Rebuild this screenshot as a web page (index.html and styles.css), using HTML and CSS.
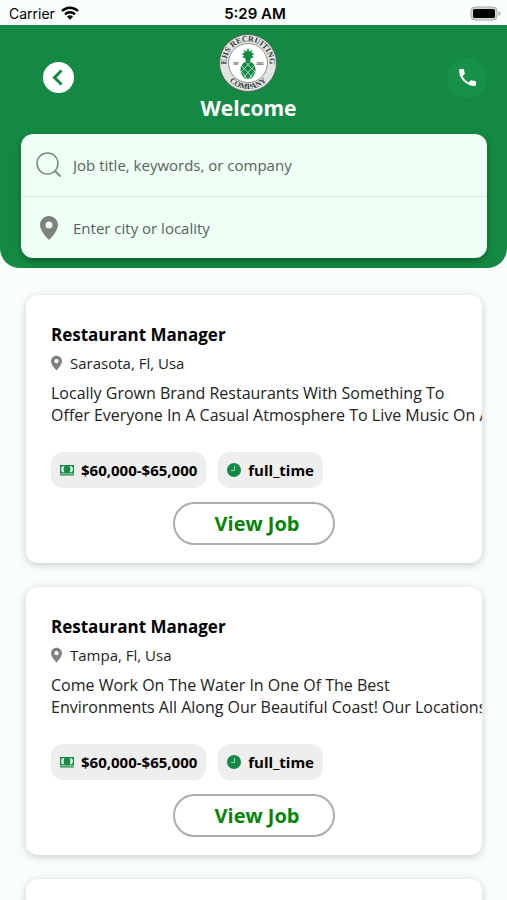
FILE: index.html
```
<!DOCTYPE html>
<html lang="en">
<head>
    <meta charset="UTF-8">
    <meta name="viewport" content="width=device-width, initial-scale=1.0">
    <title>EHS Recruiting</title>
    <link rel="stylesheet" href="styles.css">
</head>
<body>
    <svg class="sprite" width="0" height="0" aria-hidden="true">
        <symbol id="pin" viewBox="0 0 18 24">
            <path fill-rule="evenodd" d="M9 0C4 0 0 4 0 9c0 6.500 9 15 9 15s9-8.500 9-15c0-5-4-9-9-9zm0 5.500a3.500 3.500 0 1 1 0 7 3.500 3.500 0 0 1 0-7z"/>
        </symbol>
        <symbol id="cash" viewBox="0 0 14 11">
            <path fill-rule="evenodd" d="M0 0h14v8.500H0zM2.500 1.200L1.200 2.500v3.500l1.300 1.300h2C3.300 5.500 3.300 3 4.500 1.200zM9.500 1.200c1.200 1.800 1.200 4.300 0 6.100h2l1.300-1.300V2.500L11.500 1.200zM0 9.300h14v1.200H0z"/>
        </symbol>
        <symbol id="clock" viewBox="0 0 14 14">
            <circle cx="7" cy="7" r="7"/>
            <path d="M7.500 3v4.500H4" fill="none" stroke="#a5d3b6" stroke-width="1"/>
        </symbol>
    </svg>

    <div class="app">
        <div class="status-bar">
            <span class="carrier">
                Carrier
                <svg width="18" height="14" viewBox="0 0 18 14">
                    <g fill="none" stroke="#000" stroke-width="2.400">
                        <path d="M1 5a11.500 11.500 0 0 1 16 0"/>
                        <path d="M4 8.300a7.300 7.300 0 0 1 10 0"/>
                    </g>
                    <path d="M9 13.700L6 10.700a4.300 4.300 0 0 1 6 0z"/>
                </svg>
            </span>
            <span class="time">5:29 AM</span>
            <svg class="battery" width="31" height="15" viewBox="0 0 31 15">
                <rect x="1" y="1" width="26" height="13" rx="4" fill="#d8dad9" stroke="#a9abaa"/>
                <rect x="3" y="3" width="22" height="9" rx="1.500"/>
                <path d="M28.500 5v5q2-1 2-2.500t-2-2.500z" fill="#a9abaa"/>
            </svg>
        </div>

        <header class="header">
            <div class="top">
                <button class="back" aria-label="Back">
                    <svg width="31" height="31" viewBox="0 0 31 31">
                        <circle cx="15.500" cy="15.500" r="15.500" fill="#fff"/>
                        <path d="M18.500 8.500l-7 7 7 7" fill="none" stroke="#148943" stroke-width="3"/>
                    </svg>
                </button>
                <div class="brand">
                    <svg width="58" height="58" viewBox="0 0 58 58">
                        <defs>
                            <path id="arc-top" d="M8.500 35.500a21.500 21.500 0 1 1 41 0"/>
                            <path id="arc-bottom" d="M5 39a26 26 0 0 0 48 0"/>
                        </defs>
                        <circle cx="29" cy="29" r="28.500" fill="#e2e4e2" stroke="#55665b"/>
                        <circle cx="29" cy="29" r="19.500" fill="#fff" stroke="#8b938e"/>
                        <text class="logo-text"><textPath href="#arc-top" startOffset="50%">EHS RECRUITING</textPath></text>
                        <text class="logo-text"><textPath href="#arc-bottom" startOffset="50%">COMPANY</textPath></text>
                        <text class="logo-small" x="17" y="31">EST</text>
                        <text class="logo-small" x="41" y="31">2002</text>
                        <g fill="#148943">
                            <path d="M29 14l1.500 3.500 3-1.500-1 3 3 .5-2.500 2 2 2-3 .5-1.500 5h-3l-1.500-5-3-.5 2-2-2.500-2 3-.5-1-3 3 1.500z"/>
                            <ellipse cx="29" cy="36" rx="7.500" ry="9"/>
                        </g>
                        <path d="M23 32l10 11M27 28.500l9 9.500M22 37l6 7.500M35 32L25 43M31 28.500L22 38M36 37l-6 7.500" stroke="#dcefe3" stroke-width=".8"/>
                    </svg>
                    <h1>Welcome</h1>
                </div>
                <button class="call" aria-label="Call">
                    <svg width="17" height="17" viewBox="0 0 18 18">
                        <path fill="#fff" d="M3.600 7.800a15 15 0 0 0 6.600 6.600l2.200-2.200a1 1 0 0 1 1-.2c1.100.4 2.300.6 3.600.6a1 1 0 0 1 1 1V17a1 1 0 0 1-1 1A17 17 0 0 1 0 1a1 1 0 0 1 1-1h3.500a1 1 0 0 1 1 1c0 1.300.2 2.500.6 3.600a1 1 0 0 1-.3 1z"/>
                    </svg>
                </button>
            </div>
            <form class="search">
                <label class="field">
                    <svg width="26" height="26" viewBox="0 0 26 26" fill="none" stroke="#7d8981" stroke-width="1.500">
                        <circle cx="11.500" cy="11.500" r="10.500"/>
                        <path d="M18.500 18.500l6 6" stroke-width="2"/>
                    </svg>
                    <input type="text" aria-label="Job" placeholder="Job title, keywords, or company">
                </label>
                <label class="field">
                    <svg class="pin-large" width="26" height="24"><use href="#pin"/></svg>
                    <input type="text" aria-label="Location" placeholder="Enter city or locality">
                </label>
            </form>
        </header>

        <main class="jobs">
            <article class="card">
                <h2>Restaurant Manager</h2>
                <p class="place"><svg width="11" height="16"><use href="#pin"/></svg>Sarasota, Fl, Usa</p>
                <p class="description">Locally Grown Brand Restaurants With Something To<br>Offer Everyone In A Casual Atmosphere To Live Music On A</p>
                <div class="tags">
                    <span class="tag"><svg width="14" height="11"><use href="#cash"/></svg>$60,000-$65,000</span>
                    <span class="tag"><svg width="14" height="14"><use href="#clock"/></svg>full_time</span>
                </div>
                <button class="view-job">View Job</button>
            </article>

            <article class="card">
                <h2>Restaurant Manager</h2>
                <p class="place"><svg width="11" height="16"><use href="#pin"/></svg>Tampa, Fl, Usa</p>
                <p class="description">Come Work On The Water In One Of The Best<br>Environments All Along Our Beautiful Coast! Our Locations</p>
                <div class="tags">
                    <span class="tag"><svg width="14" height="11"><use href="#cash"/></svg>$60,000-$65,000</span>
                    <span class="tag"><svg width="14" height="14"><use href="#clock"/></svg>full_time</span>
                </div>
                <button class="view-job">View Job</button>
            </article>

            <article class="card"></article>
        </main>
    </div>
</body>
</html>
```
FILE: styles.css
```
* {
    box-sizing: border-box;
}

body {
    margin: 0;
    background: #f9fefc;
    color: #000;
    font-family: "Open Sans", sans-serif;
}

h1, h2, p {
    margin: 0;
}

button {
    border: 0;
    padding: 0;
    background: none;
    font-family: inherit;
    cursor: pointer;
}

svg {
    display: block;
    flex-shrink: 0;
}

.sprite {
    position: absolute;
}

.app {
    display: flex;
    flex-direction: column;
    height: 100vh;
    overflow: hidden;
}

.status-bar {
    display: grid;
    grid-template-columns: 1fr auto 1fr;
    align-items: center;
    height: 25px;
    padding: 1px 6px 0 9px;
    font-family: Inter, sans-serif;
    font-size: 15px;
    flex-shrink: 0;
}

.carrier {
    display: flex;
    align-items: center;
    gap: 6px;
    font-size: 14px;
}

.time {
    font-weight: 600;
}

.battery {
    justify-self: end;
}

.header {
    flex-shrink: 0;
    padding: 9px 20px 10px 21px;
    border-radius: 0 0 20px 20px;
    background: #148943;
}

.top {
    display: grid;
    grid-template-columns: 1fr auto 1fr;
    align-items: center;
    margin-left: -11px;
}

.back {
    justify-self: start;
    margin-left: 33px;
}

.brand {
    display: flex;
    flex-direction: column;
    align-items: center;
    gap: 3px;
}

.brand h1 {
    color: #fff;
    font-size: 21px;
    line-height: 26px;
}

.logo-text {
    font-family: "Liberation Serif", serif;
    font-size: 8px;
    font-weight: 700;
    text-anchor: middle;
    fill: #33413a;
}

.logo-small {
    font-size: 3px;
    font-weight: 700;
    text-anchor: middle;
    fill: #33413a;
}

.call {
    display: flex;
    align-items: center;
    justify-content: center;
    justify-self: end;
    width: 40px;
    height: 40px;
    border-radius: 50%;
    background: #17904a;
}

.search {
    margin-top: 13px;
    border-radius: 12px;
    background: #effff5;
    box-shadow: 0 3px 6px rgba(0, 0, 0, 0.3);
}

.field {
    display: flex;
    align-items: center;
    gap: 11px;
    height: 62px;
    padding: 0 15px;
}

.field + .field {
    border-top: 1px solid #c9f5df;
}

.field input {
    flex: 1;
    min-width: 0;
    border: 0;
    padding: 0;
    outline: 0;
    background: none;
    font-family: inherit;
    font-size: 15px;
}

.field input::placeholder {
    color: #56635b;
}

.pin-large {
    fill: #7e827f;
}

.jobs {
    display: flex;
    flex: 1;
    flex-direction: column;
    gap: 24px;
    min-height: 0;
    padding: 27px 25px 0 26px;
    overflow: hidden;
}

.card {
    flex-shrink: 0;
    min-height: 268px;
    padding: 26px 25px 18px;
    border-radius: 12px;
    background: #fff;
    box-shadow: 0 2px 8px rgba(0, 0, 0, 0.2);
    overflow: hidden;
}

.card h2 {
    font-size: 17px;
    line-height: 28px;
}

.place {
    display: flex;
    align-items: center;
    gap: 8px;
    font-size: 15px;
    line-height: 28px;
    color: #222;
}

.place svg {
    fill: #7e827f;
}

.description {
    margin-top: 5px;
    color: #222;
    font-size: 16px;
    line-height: 22px;
    white-space: nowrap;
}

.tags {
    display: flex;
    gap: 12px;
    margin-top: 26px;
}

.tag {
    display: flex;
    align-items: center;
    gap: 7px;
    height: 36px;
    padding: 0 9px;
    border-radius: 12px;
    background: #eeeeee;
    font-size: 15px;
    font-weight: 700;
}

.tag svg {
    fill: #148943;
}

.view-job {
    display: block;
    width: 162px;
    height: 43px;
    margin: 14px auto 0;
    padding-left: 6px;
    border: 2px solid #adadad;
    border-radius: 22px;
    color: #068406;
    font-size: 20px;
    font-weight: 700;
}
```
